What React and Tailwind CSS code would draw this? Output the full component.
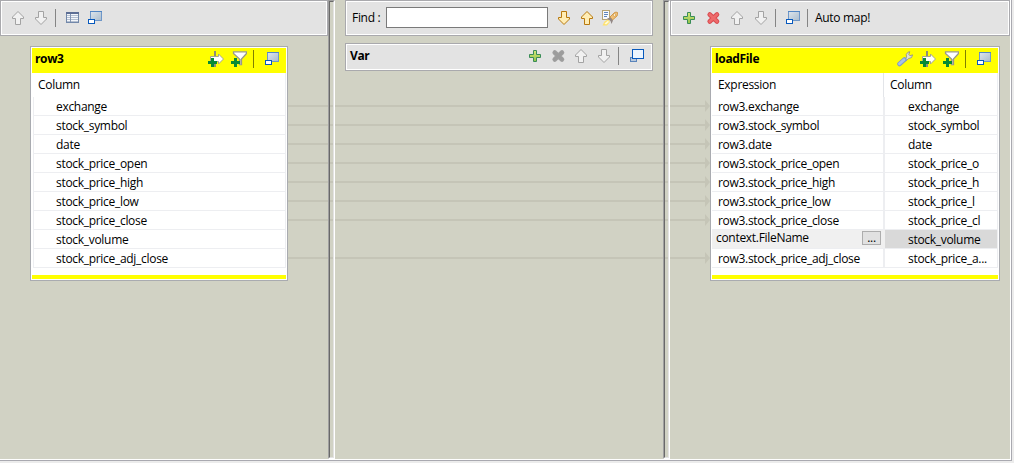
import React from "react";

const COLUMNS = [
  { name: "exchange", short: "exchange" },
  { name: "stock_symbol", short: "stock_symbol" },
  { name: "date", short: "date" },
  { name: "stock_price_open", short: "stock_price_o" },
  { name: "stock_price_high", short: "stock_price_h" },
  { name: "stock_price_low", short: "stock_price_l" },
  { name: "stock_price_close", short: "stock_price_cl" },
  { name: "stock_volume", short: "stock_volume", editing: "context.FileName" },
  { name: "stock_price_adj_close", short: "stock_price_a..." },
];

function Icon({ className = "", children }) {
  return (
    <svg viewBox="0 0 16 16" className={`h-4 w-4 shrink-0 ${className}`}>
      {children}
    </svg>
  );
}

const ARROW = {
  gray: { stroke: "#a3a3a3", fill: "#f1f1f1" },
  gold: { stroke: "#b8790f", fill: "#ffedb5" },
};

function UpArrow({ tone = "gray", className }) {
  return (
    <Icon className={className}>
      <path d="M8 1.500 L13.500 7 V8.500 H10.500 V14.500 H5.500 V8.500 H2.500 V7 Z" fill={ARROW[tone].fill} stroke={ARROW[tone].stroke} />
    </Icon>
  );
}

function DownArrow({ tone = "gray", className }) {
  return (
    <Icon className={className}>
      <path d="M8 14.500 L2.500 9 V7.500 H5.500 V1.500 H10.500 V7.500 H13.500 V9 Z" fill={ARROW[tone].fill} stroke={ARROW[tone].stroke} />
    </Icon>
  );
}

function TableIcon({ className }) {
  return (
    <Icon className={className}>
      <rect x="2.500" y="2.500" width="12" height="10" fill="#f4f7fb" stroke="#7288aa" />
      <rect x="2" y="2" width="13" height="2" fill="#5d6e94" />
      <path d="M3 5.500H14M3 7.500H14M3 9.500H14M3 11.500H14" stroke="#b4bfd0" />
      <path d="M6.500 4V12" stroke="#8395b4" />
    </Icon>
  );
}

function MinimizeIcon({ className }) {
  return (
    <Icon className={className}>
      <defs>
        <linearGradient id="screen" x1="0" y1="0" x2="1" y2="1">
          <stop offset="0" stopColor="#dfe6ec" />
          <stop offset="1" stopColor="#a9bccd" />
        </linearGradient>
      </defs>
      <rect x="3.500" y="1.500" width="11" height="9" fill="url(#screen)" stroke="#6f97c8" />
      <path d="M3 1.500H15" stroke="#5286c4" />
      <rect x="1.500" y="9.500" width="6" height="4" fill="#fff" stroke="#0759bd" />
    </Icon>
  );
}

function RestoreIcon({ className }) {
  return (
    <Icon className={className}>
      <rect x="1.500" y="9.500" width="6" height="4" fill="#b9c9dc" stroke="#5a84bb" />
      <rect x="3.500" y="1.500" width="11" height="9" fill="#ecf5fe" stroke="#0759bd" />
      <path d="M3 1.500H15" stroke="#0759bd" />
    </Icon>
  );
}

function PlusIcon({ className }) {
  return (
    <Icon className={className}>
      <defs>
        <linearGradient id="plus" x1="0" y1="0" x2="0" y2="1">
          <stop offset="0" stopColor="#d6e77b" />
          <stop offset="1" stopColor="#8fc248" />
        </linearGradient>
      </defs>
      <path d="M6.500 2.500H9.500V6.500H13.500V9.500H9.500V13.500H6.500V9.500H2.500V6.500H6.500Z" fill="url(#plus)" stroke="#398c58" />
    </Icon>
  );
}

function CrossIcon({ outer, inner, className }) {
  return (
    <Icon className={className}>
      <path d="M4.700 4.500 L12 11.500 M12 4.500 L4.700 11.500" stroke={outer} strokeWidth="4.600" strokeLinecap="round" />
      <path d="M4.700 4.500 L12 11.500 M12 4.500 L4.700 11.500" stroke={inner} strokeWidth="2.600" strokeLinecap="round" />
    </Icon>
  );
}

function SearchRocketIcon({ className }) {
  return (
    <Icon className={className}>
      <rect x="0.500" y="0.500" width="7" height="9" fill="#f8fafd" stroke="#b5a375" />
      <path d="M2 2.500H6M2 4.500H6M2 6.500H5" stroke="#5f86bd" />
      <path d="M8 7 L12.500 2.500 Q14 1.800 15.500 2.500 Q16 4.500 15 6 L10.500 10 Z" fill="#f0c078" stroke="#c98b35" strokeWidth="0.800" />
      <circle cx="12.500" cy="5" r="1.300" fill="#fff8e0" stroke="#ca8c35" strokeWidth="0.600" />
      <path d="M5 8.500 L8.500 7.500 L11 10.500 L9.500 14 L8.500 11 Z" fill="#938885" />
      <path d="M0.500 15.500 L2.500 11.500 L6 9.500 L8 12 L5 15.500 Z" fill="#ffe16c" />
      <path d="M2.500 13.500 L6 10.500 L7 12 L4 14.500 Z" fill="#fffbd9" />
    </Icon>
  );
}

function GreenPlus() {
  return <path d="M3 7H6V10H9V13H6V16H3V13H0V10H3Z" fill="#078a35" />;
}

function AddInputIcon({ className }) {
  return (
    <Icon className={className}>
      <path d="M7 0V16" stroke="#8d8d7d" strokeWidth="2" />
      <path d="M2.500 5.500H10.500V3L15.500 8L10.500 13V10.500H2.500Z" fill="#fff" stroke="#a5a58e" />
      <GreenPlus />
    </Icon>
  );
}

function AddFilterIcon({ className }) {
  return (
    <Icon className={className}>
      <path d="M2.500 0.800H15.500V2.500L10.500 8V13.500H8.500V8L2.500 2.500Z" fill="#fff" stroke="#99998b" strokeWidth="1.300" />
      <path d="M9.500 8V13.500" stroke="#b4b4a8" />
      <GreenPlus />
    </Icon>
  );
}

function WrenchIcon({ className }) {
  return (
    <Icon className={className}>
      <path d="M7 9 L9.500 6.500 Q8.300 3 11 1.200 L12.800 0.700 L11.800 3.500 L13 4.800 L15.600 3.800 Q15.500 7.500 11.500 7.600 L9 10 Z" fill="#e0e0d3" stroke="#929386" strokeWidth="0.900" />
      <path d="M2.500 13 L7.500 8.500" stroke="#7e9bc8" strokeWidth="4.500" strokeLinecap="round" />
      <path d="M2.500 12.800 L7 8.800" stroke="#a9c2e6" strokeWidth="2.800" strokeLinecap="round" />
    </Icon>
  );
}

function Separator({ className = "bg-[#858585]" }) {
  return <div className={`h-[18px] w-px shrink-0 ${className}`} />;
}

function Panel({ className, children }) {
  return (
    <div className={`border border-[#a9a9ad] ${className}`}>
      <div className="flex h-full w-full items-center border border-white">{children}</div>
    </div>
  );
}

function TableFrame({ title, className, actions, children }) {
  return (
    <div className={`h-[235px] border border-[#a9abb0] bg-white p-px ${className}`}>
      <div className="flex h-[25px] items-center bg-[#ffff00]">
        <span className="pb-[3px] pl-[3px] text-[12px] font-bold tracking-[-0.35px]">{title}</span>
        <div className="ml-auto flex items-center pb-[3px]">{actions}</div>
      </div>
      {children}
      <div className="mt-[7px] h-1 bg-[#ffff00]" />
    </div>
  );
}

function Sash() {
  return (
    <div className="h-[459px] w-[7px] shrink-0 border-t border-r border-b border-l border-t-[#a0a0a0] border-r-white border-b-white border-l-[#a0a0a0]">
      <div className="h-full w-full border-t border-r border-b border-l border-t-[#696969] border-r-[#e3e3e3] border-b-[#e3e3e3] border-l-[#696969]" />
    </div>
  );
}

function Links() {
  return (
    <svg className="pointer-events-none absolute top-0 left-0" width="1012" height="461">
      {COLUMNS.map((c, i) => {
        if (c.editing) return null;
        const y = 106 + i * 19;
        return (
          <g key={c.name} fill="#c5c5b7">
            <rect x="288" y={y - 1} width="40" height="2" />
            <rect x="330" y={y - 1} width="3" height="2" />
            <rect x="335" y={y - 1} width="328" height="2" />
            <rect x="665" y={y - 1} width="3" height="2" />
            <rect x="670" y={y - 1} width="36" height="2" />
            <path d={`M705 ${y - 6} L710 ${y} L705 ${y + 6} Z`} />
          </g>
        );
      })}
    </svg>
  );
}

export default function App() {
  return (
    <div className="h-[463px] w-[1014px] overflow-hidden bg-[#ececec] font-['Open_Sans','Noto_Sans',sans-serif] text-[12px] leading-[16px] tracking-[-0.3px] whitespace-nowrap text-black">
      <div className="relative h-[461px] w-[1012px] border-r border-b border-[#a9a9b0] bg-[#d1d2c4]">
        <div className="flex h-[460px] border-r border-b border-white">
          <section className="w-[328px] shrink-0">
            <Panel className="h-9 bg-[#e3e3e3]">
              <UpArrow className="ml-[8px]" />
              <DownArrow className="ml-[7px]" />
              <div className="ml-[6px] flex items-center">
                <Separator />
              </div>
              <TableIcon className="ml-[8px]" />
              <MinimizeIcon className="ml-[7px]" />
            </Panel>
            <TableFrame
              title="row3"
              className="mt-[10px] ml-[30px] w-[258px]"
              actions={
                <>
                  <AddInputIcon />
                  <AddFilterIcon className="ml-[7px]" />
                  <div className="ml-[6px] flex">
                    <Separator className="bg-[#808000]" />
                  </div>
                  <MinimizeIcon className="mr-[6px] ml-[10px]" />
                </>
              }
            >
              <div className="h-6 border-r border-[#edeff3] pt-[4px] pl-[6px]">Column</div>
              {COLUMNS.map((c) => (
                <div key={c.name} className="ml-px h-[19px] border-r border-b border-l border-[#edeef1] pt-[2px] pl-[22px]">
                  {c.name}
                </div>
              ))}
            </TableFrame>
          </section>

          <Sash />

          <section className="w-[328px] shrink-0">
            <Panel className="ml-[10px] h-9 w-[308px] bg-[#e3e3e3]">
              <label className="ml-[5px] w-[34px]">Find :</label>
              <input className="mb-[2px] h-[21px] w-[162px] border border-[#7a7a7a] bg-white outline-none" />
              <DownArrow tone="gold" className="ml-[8px]" />
              <UpArrow tone="gold" className="ml-[7px]" />
              <SearchRocketIcon className="ml-[7px]" />
            </Panel>
            <Panel className="mt-[7px] ml-[10px] h-7 w-[308px] bg-[#e3e3e3]">
              <span className="ml-[3px] w-[177px] pb-[2px] font-bold tracking-[-0.35px]">Var</span>
              <div className="flex items-center pb-[2px]">
                <PlusIcon />
                <CrossIcon outer="#a0a0a0" inner="#9c9c9c" className="ml-[7px]" />
                <UpArrow className="ml-[7px]" />
                <DownArrow className="ml-[7px]" />
                <div className="ml-[6px] flex">
                  <Separator />
                </div>
                <RestoreIcon className="ml-[10px]" />
              </div>
            </Panel>
          </section>

          <Sash />

          <section className="w-[340px] shrink-0">
            <Panel className="h-9 bg-[#e3e3e3]">
              <PlusIcon className="ml-[9px]" />
              <CrossIcon outer="#d84b50" inner="#ee6b6b" className="ml-[8px]" />
              <UpArrow className="ml-[8px]" />
              <DownArrow className="ml-[8px]" />
              <div className="ml-[6px] flex">
                <Separator />
              </div>
              <MinimizeIcon className="ml-[9px]" />
              <div className="ml-[6px] flex">
                <Separator />
              </div>
              <span className="ml-[7px]">Auto map!</span>
            </Panel>
            <TableFrame
              title="loadFile"
              className="mt-[10px] ml-[40px] w-[290px]"
              actions={
                <>
                  <WrenchIcon />
                  <AddInputIcon className="ml-[7px]" />
                  <AddFilterIcon className="ml-[7px]" />
                  <div className="ml-[6px] flex">
                    <Separator className="bg-[#808000]" />
                  </div>
                  <MinimizeIcon className="mr-[6px] ml-[10px]" />
                </>
              }
            >
              <div className="flex h-6 border-r border-[#edeff3] pt-[4px]">
                <div className="-mt-1 w-[172px] border-r border-[#e3e5e9] pt-1 pl-[6px]">Expression</div>
                <div className="pl-[6px]">Column</div>
              </div>
              {COLUMNS.map((c) => (
                <div key={c.name} className="flex h-[19px]">
                  {c.editing ? (
                    <div className="flex w-[173px] justify-between border-b border-[#edeef1] bg-[#f0f0f0] pl-1">
                      <span>{c.editing}</span>
                      <button className="mt-px mr-[4px] h-[14px] w-[19px] border border-[#adadad] bg-[#e1e1e1] text-[12px] leading-[10px]">...</button>
                    </div>
                  ) : (
                    <div className="w-[173px] border-r-2 border-b border-[#edeef1] pt-[2px] pl-[6px]">row3.{c.name}</div>
                  )}
                  <div className={`flex-1 border-r border-b border-[#edeef1] pt-[2px] pl-[23px] ${c.editing ? "bg-[#d9d9d9]" : ""}`}>
                    {c.short}
                  </div>
                </div>
              ))}
            </TableFrame>
          </section>
        </div>
        <Links />
      </div>
    </div>
  );
}
